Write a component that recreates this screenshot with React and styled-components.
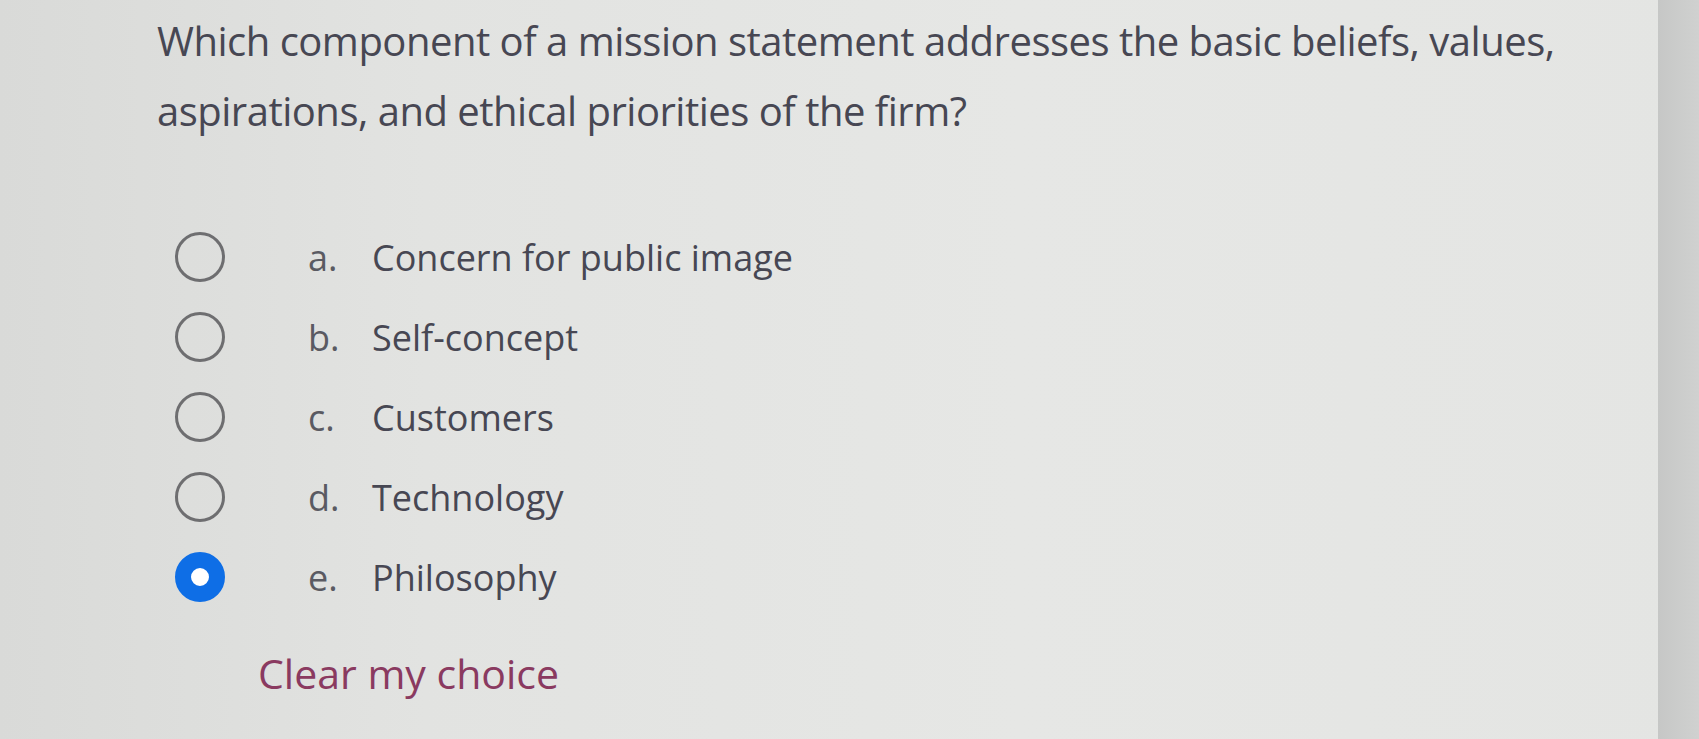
import * as React from 'react';
import styled, { createGlobalStyle } from 'styled-components';

const GlobalStyle = createGlobalStyle`
  html, body {
    margin: 0;
    padding: 0;
    height: 100%;
    overflow: hidden;
  }
  #root {
    height: 100%;
  }
`;

const options = [
  { letter: 'a.', text: 'Concern for public image' },
  { letter: 'b.', text: 'Self-concept' },
  { letter: 'c.', text: 'Customers' },
  { letter: 'd.', text: 'Technology' },
  { letter: 'e.', text: 'Philosophy', checked: true },
];

const App = () => {
  return (
    <>
      <GlobalStyle />
      <Screen>
        <Main>
          <Question>
            Which component of a mission statement addresses the basic beliefs, values,
            <br />
            aspirations, and ethical priorities of the firm?
          </Question>
          <Answers>
            {options.map((o) => (
              <Option key={o.letter}>
                <Radio $checked={o.checked} />
                <Letter>{o.letter}</Letter>
                <Label>{o.text}</Label>
              </Option>
            ))}
          </Answers>
          <ClearLink>Clear my choice</ClearLink>
        </Main>
        <Edge />
      </Screen>
    </>
  );
};

export default App;

const Screen = styled.div`
  display: flex;
  height: 100%;
  background: linear-gradient(90deg, #d9dad8 0%, #e2e3e1 25%, #e6e7e5 60%, #e4e5e3 100%);
  font-family: "Open Sans", "Noto Sans", sans-serif;
`;

const Main = styled.div`
  flex: 1;
  padding: 6px 0 0 157px;
`;

const Edge = styled.div`
  width: 41px;
  background: linear-gradient(90deg, #c6c7c6, #d0d1d0);
`;

const Question = styled.p`
  margin: 0;
  white-space: nowrap;
  font-size: 40px;
  letter-spacing: -0.5px;
  line-height: 70px;
  color: #474753;
`;

const Answers = styled.div`
  display: flex;
  flex-direction: column;
  margin-top: 71px;
  padding-left: 18px;
`;

const Option = styled.div`
  display: flex;
  align-items: center;
  height: 80px;
  font-size: 36px;
  color: #474753;
`;

const Radio = styled.span`
  box-sizing: border-box;
  width: 50px;
  height: 50px;
  border-radius: 50%;
  border: ${({ $checked }) => ($checked ? '16px solid #0e6ee6' : '3px solid #6e6e70')};
  background: ${({ $checked }) => ($checked ? '#ffffff' : 'transparent')};
  flex-shrink: 0;
`;

const Letter = styled.span`
  width: 64px;
  margin-left: 83px;
  color: #5a5a62;
`;

const Label = styled.span``;

const ClearLink = styled.a`
  display: block;
  margin: 28px 0 0 101px;
  font-size: 41px;
  color: #8a3a60;
  cursor: pointer;
`;
